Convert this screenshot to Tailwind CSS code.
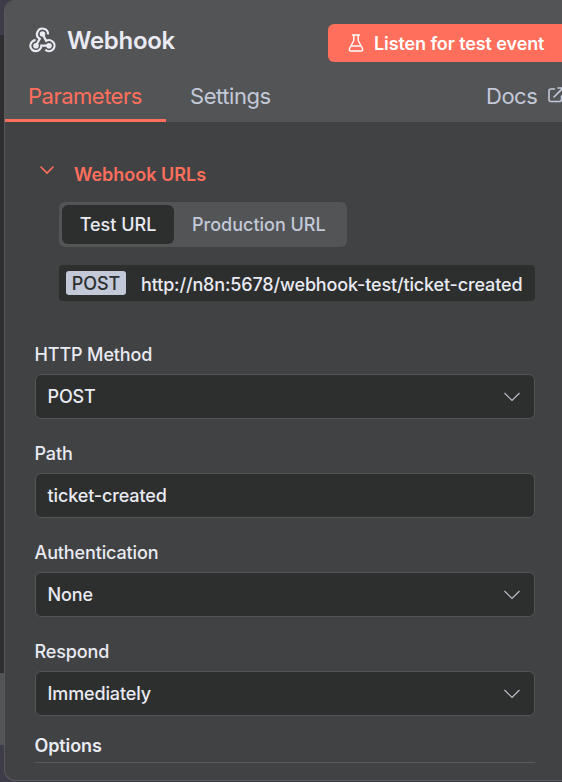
<!DOCTYPE html>
<html lang="en">
<head>
<meta charset="utf-8">
<title>Webhook</title>
<script src="https://cdn.jsdelivr.net/npm/@tailwindcss/browser@4"></script>
</head>
<body class="relative h-[782px] w-[562px] overflow-hidden bg-[#3f3c49] font-['Inter',sans-serif] text-[18px] font-medium text-[#e9eaf2]">
<div class="absolute top-[35px] left-0 h-[638px] w-5 bg-[#2e2e30]"></div>
<div class="absolute top-[673px] left-0 h-[72px] w-5 bg-[#535456]"></div>
<main class="relative ml-1 flex h-[781px] w-[570px] flex-col overflow-hidden rounded-[11px] border border-t-0 border-[#58595b] bg-[#414244]">
  <header class="h-[122px] shrink-0 bg-[#535456]">
    <div class="flex h-[74px] items-start pl-6">
      <svg class="mt-[27px] h-[27px] w-[27px] shrink-0" viewBox="0 0 27 27" fill="none" stroke="#e9eaf2" stroke-width="2.2">
        <path d="M19 7.4A5.5 5.5 0 1 0 10.7 11.8L7 18.7"/>
        <path d="M6.6 13.2A5.5 5.5 0 1 0 12.3 18.7H20"/>
        <path d="M13.5 7L17.2 13.9A5.5 5.5 0 1 1 16.3 22.7"/>
        <circle cx="13.5" cy="7" r="1.7" fill="#e9eaf2"/><circle cx="7" cy="18.7" r="1.7" fill="#e9eaf2"/><circle cx="20" cy="18.7" r="1.7" fill="#e9eaf2"/>
      </svg>
      <h1 class="mt-[23px] ml-[11px] w-[110px] text-[24px] leading-9 font-semibold tracking-[-0.3px]">Webhook</h1>
      <button class="mt-6 ml-[153px] flex h-[38px] w-[250px] shrink-0 items-center rounded-md bg-[#ff6f5c] pl-5 font-semibold tracking-[-0.1px] whitespace-nowrap text-white">
        <svg class="mr-[10px] h-[18px] w-4" viewBox="0 0 16 18" fill="none" stroke="currentColor" stroke-width="1.4" stroke-linejoin="round" stroke-linecap="round"><path d="M4.5 1H11.5M5.8 1V6.5L1.5 14.5Q.8 17 3 17H13Q15.2 17 14.5 14.5L10.2 6.5V1M3.2 12H12.8"/></svg>
        Listen for test event
      </button>
    </div>
    <nav class="flex h-12 text-[22px] leading-[45px] font-normal tracking-[-0.5px] text-[#c3c9d9]">
      <a class="w-[161px] shrink-0 border-b-3 border-[#ff6f5c] pl-[23px] text-[#ff6f5c]">Parameters</a>
      <a class="w-[296px] shrink-0 pl-6 tracking-[-0.45px]">Settings</a>
      <a class="flex shrink-0 pl-6">Docs
        <svg class="mt-[13px] ml-[11px] h-[16px] w-[16px]" viewBox="0 0 16 16" fill="none" stroke="currentColor" stroke-width="1.6" stroke-linecap="round" stroke-linejoin="round"><path d="M6.5 2H3Q1 2 1 4V12.5Q1 14.5 3 14.5H11.5Q13.5 14.5 13.5 12.5V9M6 10L15 1M10 1H15V6"/></svg>
      </a>
    </nav>
  </header>
  <section class="pt-[39px] pl-[30px]">
    <div class="flex h-[27px] items-center text-[#ff6f5c]">
      <svg class="mt-[-10px] ml-1 h-[10px] w-4" viewBox="0 0 16 10" fill="none" stroke="currentColor" stroke-width="1.6" stroke-linecap="round"><path d="M2 2L8 8L14 2"/></svg>
      <h2 class="ml-[19px] font-semibold">Webhook URLs</h2>
    </div>
    <div class="mt-[14px] ml-6 flex h-[45px] w-[288px] items-center rounded-md bg-[#535456] p-[3px] whitespace-nowrap">
      <span class="flex h-[39px] w-[112px] items-center justify-center rounded-md bg-[#2d2f2e]">Test URL</span>
      <span class="ml-[18px] text-[#c3c9d9]">Production URL</span>
    </div>
    <div class="mt-[18px] ml-6 flex h-9 w-[476px] items-center rounded bg-[#2d2f2e] pl-[7px] whitespace-nowrap">
      <span class="flex h-6 w-[60px] items-center justify-center rounded-[3px] bg-[#c3c9d9] text-[#2d2f2e]">POST</span>
      <span class="mt-[3px] ml-[15px] tracking-[-0.15px]">http://n8n:5678/webhook-test/ticket-created</span>
    </div>
    <div class="mt-[40px] flex w-[500px] flex-col gap-[21px] tracking-[-0.13px]">
      <div><div class="-ml-[0.5px] h-[33px] leading-[27px]">HTTP Method</div>
        <div class="flex h-[45px] items-center justify-between rounded-md border border-[#535456] bg-[#2d2f2e] pr-[14px] pl-[11.5px]">POST<svg class="h-[10px] w-4" viewBox="0 0 16 10" fill="none" stroke="#bcc0ce" stroke-width="1.2"><path d="M.5 1L8 8.5L15.5 1"/></svg></div></div>
      <div><div class="-ml-[0.5px] h-[33px] leading-[27px]">Path</div>
        <div class="flex h-[45px] items-center rounded-md border border-[#535456] bg-[#2d2f2e] pl-[11.5px]">ticket-created</div></div>
      <div><div class="-ml-[0.5px] h-[33px] leading-[27px]">Authentication</div>
        <div class="flex h-[45px] items-center justify-between rounded-md border border-[#535456] bg-[#2d2f2e] pr-[14px] pl-[11.5px]">None<svg class="h-[10px] w-4" viewBox="0 0 16 10" fill="none" stroke="#bcc0ce" stroke-width="1.2"><path d="M.5 1L8 8.5L15.5 1"/></svg></div></div>
      <div><div class="-ml-[0.5px] h-[33px] leading-[27px]">Respond</div>
        <div class="flex h-[45px] items-center justify-between rounded-md border border-[#535456] bg-[#2d2f2e] pr-[14px] pl-[11.5px]">Immediately<svg class="h-[10px] w-4" viewBox="0 0 16 10" fill="none" stroke="#bcc0ce" stroke-width="1.2"><path d="M.5 1L8 8.5L15.5 1"/></svg></div></div>
    </div>
    <h3 class="mt-4 h-[31px] w-[500px] border-b border-[#58595b] leading-[27px] font-semibold tracking-[-0.1px]"><span class="-ml-[0.5px]">Options</span></h3>
  </section>
</main>
</body>
</html>
